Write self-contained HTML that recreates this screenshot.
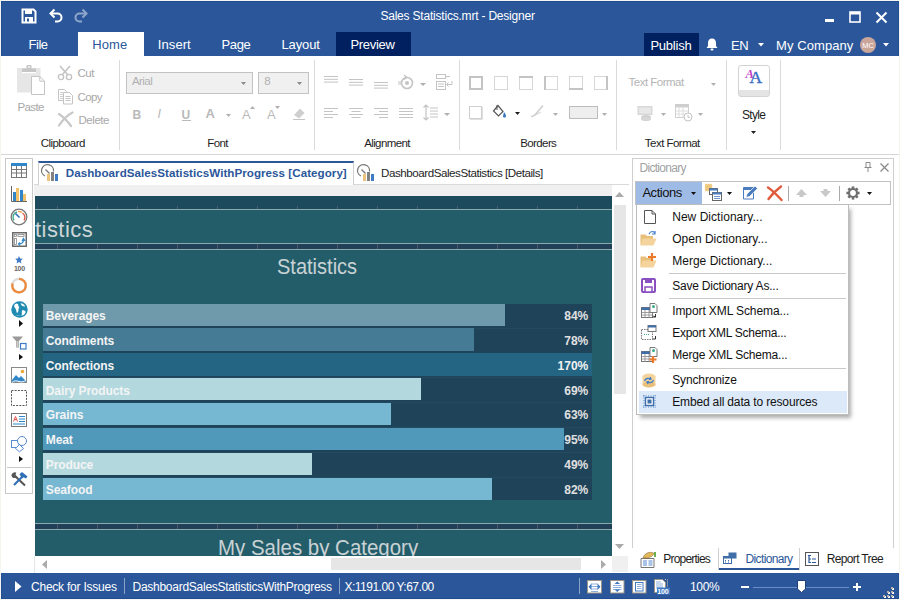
<!DOCTYPE html>
<html><head><meta charset="utf-8">
<style>
*{margin:0;padding:0;box-sizing:border-box}
html,body{width:900px;height:600px;overflow:hidden;background:#fff;font-family:"Liberation Sans",sans-serif}
.a{position:absolute}
.t{position:absolute;white-space:nowrap;line-height:1}
svg{position:absolute;overflow:visible}
</style></head><body>
<div class="a" style="left:0px;top:0px;width:900px;height:600px;background:#fff;border:1px solid #f6f4ef"></div>
<div class="a" style="left:1px;top:1px;width:898px;height:55px;background:#2b579a;border-top:1px solid #1f4c92;border-left:1px solid #234f94;border-right:1px solid #234f94"></div>
<div class="t" style="left:380.40px;top:10.44px;font-size:12px;color:#fff;font-weight:400;letter-spacing:-0.204px;">Sales Statistics.mrt - Designer</div>
<svg style="left:21px;top:8px" width="16" height="16" viewBox="0 0 16 16"><path d="M1.5 1.5h11l2 2v11h-13z" fill="none" stroke="#fff" stroke-width="2"/><rect x="4" y="2" width="7" height="4" fill="#fff"/><rect x="4" y="9" width="8" height="5" fill="#fff"/><rect x="6" y="10.5" width="2" height="3" fill="#2b579a"/></svg>
<svg style="left:48px;top:8px" width="16" height="16" viewBox="0 0 16 16"><path d="M3 5.5h6.5a4 4 0 0 1 0 8H7" fill="none" stroke="#fff" stroke-width="2"/><path d="M6.5 1.5L2.5 5.5L6.5 9.5" fill="none" stroke="#fff" stroke-width="2"/></svg>
<svg style="left:73px;top:8px" width="16" height="16" viewBox="0 0 16 16"><path d="M13 5.5H6.5a4 4 0 0 0 0 8H9" fill="none" stroke="#8fa6cc" stroke-width="2"/><path d="M9.5 1.5L13.5 5.5L9.5 9.5" fill="none" stroke="#8fa6cc" stroke-width="2"/></svg>
<div class="a" style="left:825px;top:19px;width:9px;height:3px;background:#fff;"></div>
<svg style="left:849px;top:11px" width="12" height="12" viewBox="0 0 12 12"><rect x="1" y="1" width="10" height="10" fill="none" stroke="#fff" stroke-width="1.6"/><rect x="1" y="1" width="10" height="2.5" fill="#fff"/></svg>
<svg style="left:875px;top:11px" width="13" height="13" viewBox="0 0 13 13"><path d="M1.5 1.5L11.5 11.5M11.5 1.5L1.5 11.5" stroke="#fff" stroke-width="2"/></svg>
<div class="t" style="left:28.60px;top:37.90px;font-size:13px;color:#fff;font-weight:400;letter-spacing:-0.513px;">File</div>
<div class="a" style="left:78px;top:32px;width:66px;height:24px;background:#fff;"></div>
<div class="t" style="left:92.20px;top:37.90px;font-size:13px;color:#2b579a;font-weight:400;letter-spacing:0.153px;">Home</div>
<div class="t" style="left:157.80px;top:37.90px;font-size:13px;color:#fff;font-weight:400;letter-spacing:0.081px;">Insert</div>
<div class="t" style="left:221.50px;top:37.90px;font-size:13px;color:#fff;font-weight:400;letter-spacing:-0.369px;">Page</div>
<div class="t" style="left:281.40px;top:37.90px;font-size:13px;color:#fff;font-weight:400;letter-spacing:-0.108px;">Layout</div>
<div class="a" style="left:336px;top:32px;width:75px;height:24px;background:#012060;"></div>
<div class="t" style="left:350.40px;top:37.90px;font-size:13px;color:#fff;font-weight:400;letter-spacing:-0.279px;">Preview</div>
<div class="a" style="left:644px;top:33px;width:55px;height:23px;background:#012060;"></div>
<div class="t" style="left:650.40px;top:39.30px;font-size:13px;color:#fff;font-weight:400;letter-spacing:-0.234px;">Publish</div>
<svg style="left:705px;top:37px" width="14" height="14" viewBox="0 0 14 14"><path d="M7 1.5c-2.6 0-4 2-4 4.5v3L1.5 11h11L11 9V6c0-2.5-1.4-4.5-4-4.5z" fill="#fff"/><rect x="5.5" y="11.5" width="3" height="2" rx="1" fill="#fff"/></svg>
<div class="t" style="left:731.00px;top:39.30px;font-size:13px;color:#fff;font-weight:400;letter-spacing:-0.331px;">EN</div>
<svg style="left:757.5px;top:42.5px" width="6" height="3.5" viewBox="0 0 6 3.5"><path d="M0 0h6L3 3.5z" fill="#fff"/></svg>
<div class="t" style="left:776.00px;top:39.30px;font-size:13px;color:#fff;font-weight:400;letter-spacing:0.082px;">My Company</div>
<div class="a" style="left:860px;top:36.5px;width:16px;height:16px;border-radius:50%;background:#c9a59a"></div>
<div class="t" style="left:862.30px;top:41.85px;font-size:7.5px;color:#fff;font-weight:400;letter-spacing:0px;">MC</div>
<svg style="left:882.5px;top:43px" width="6" height="3.5" viewBox="0 0 6 3.5"><path d="M0 0h6L3 3.5z" fill="#fff"/></svg>
<div class="a" style="left:1px;top:154px;width:898px;height:1px;background:#d6d6d6;"></div>
<div class="a" style="left:119px;top:60px;width:1px;height:90px;background:#dadada;"></div>
<div class="a" style="left:314px;top:60px;width:1px;height:90px;background:#dadada;"></div>
<div class="a" style="left:459px;top:60px;width:1px;height:90px;background:#dadada;"></div>
<div class="a" style="left:616px;top:60px;width:1px;height:90px;background:#dadada;"></div>
<div class="a" style="left:726px;top:60px;width:1px;height:90px;background:#dadada;"></div>
<div class="a" style="left:780px;top:60px;width:1px;height:90px;background:#dadada;"></div>
<svg style="left:16px;top:64px" width="32" height="32" viewBox="0 0 32 32"><rect x="1" y="4" width="23.5" height="24.5" fill="#e6e6e6"/><rect x="6" y="4.5" width="14" height="3.5" fill="#c6c6c6"/><rect x="6" y="8" width="14" height="1.2" fill="#fff"/><rect x="10.5" y="1" width="5" height="4" rx="1" fill="#c6c6c6"/><rect x="12.3" y="2.2" width="1.6" height="1.6" fill="#fff"/><path d="M15.5 12.5h8.3l4.7 4.7v13.3h-13z" fill="#fff" stroke="#c4c4c4"/><path d="M23.8 12.5v4.7h4.7" fill="none" stroke="#c4c4c4"/></svg>
<div class="t" style="left:17.40px;top:101.57px;font-size:11.5px;color:#a8a8a8;font-weight:400;letter-spacing:-0.584px;">Paste</div>
<svg style="left:57px;top:65px" width="16" height="16" viewBox="0 0 16 16"><path d="M3 1l8 9M13 1L5 10" stroke="#c4c4c4" stroke-width="1.6"/><circle cx="4" cy="12" r="2.6" fill="none" stroke="#c4c4c4" stroke-width="1.4"/><circle cx="12" cy="12" r="2.6" fill="none" stroke="#c4c4c4" stroke-width="1.4"/></svg>
<div class="t" style="left:77.40px;top:68.47px;font-size:11.5px;color:#a8a8a8;font-weight:400;letter-spacing:-0.469px;">Cut</div>
<svg style="left:57.5px;top:89px" width="16" height="16" viewBox="0 0 16 16"><path d="M0.5 0.5h6l2 2v9h-8z" fill="#fff" stroke="#c4c4c4"/><path d="M2 3.5h3M2 5.5h4M2 7.5h4M2 9.5h4" stroke="#cfcfcf"/><path d="M5.5 3.5h6l3 3v8.5h-9z" fill="#fff" stroke="#c4c4c4"/><path d="M7.5 7.5h5M7.5 9.5h5M7.5 11.5h5" stroke="#c4c4c4"/></svg>
<div class="t" style="left:77.40px;top:91.57px;font-size:11.5px;color:#a8a8a8;font-weight:400;letter-spacing:-0.565px;">Copy</div>
<svg style="left:57.5px;top:112px" width="16" height="15" viewBox="0 0 16 15"><path d="M1 13.5C4 9 8 4 14.5 0.5M1 2c3 2 8 6.5 12 12" fill="none" stroke="#c8c8c8" stroke-width="2.2" stroke-linecap="round"/></svg>
<div class="t" style="left:78.50px;top:114.57px;font-size:11.5px;color:#a8a8a8;font-weight:400;letter-spacing:-0.458px;">Delete</div>
<div class="t" style="left:40.70px;top:137.57px;font-size:11.5px;color:#1e1e1e;font-weight:400;letter-spacing:-0.57px;">Clipboard</div>
<div class="a" style="left:126px;top:72px;width:127px;height:22px;background:#f0f0f0;border:1px solid #c3c3c3"></div>
<div class="t" style="left:132.00px;top:76.47px;font-size:11.5px;color:#b0b0b0;font-weight:400;letter-spacing:-0.563px;">Arial</div>
<svg style="left:240.5px;top:82px" width="5" height="3" viewBox="0 0 5 3"><path d="M0 0h5L2.5 3z" fill="#8a8a8a"/></svg>
<div class="a" style="left:258px;top:72px;width:51px;height:22px;background:#f0f0f0;border:1px solid #c3c3c3"></div>
<div class="t" style="left:264.20px;top:76.47px;font-size:11.5px;color:#b0b0b0;font-weight:400;letter-spacing:0px;">8</div>
<svg style="left:296.5px;top:82px" width="5" height="3" viewBox="0 0 5 3"><path d="M0 0h5L2.5 3z" fill="#8a8a8a"/></svg>
<div class="t" style="left:132.50px;top:108.64px;font-size:12px;color:#b9b9b9;font-weight:700;letter-spacing:0px;">B</div>
<div class="t" style="left:157.50px;top:108.22px;font-size:12.5px;color:#b9b9b9;font-weight:400;letter-spacing:0px;font-style:italic;">I</div>
<div class="t" style="left:181.50px;top:108.64px;font-size:12px;color:#b9b9b9;font-weight:700;letter-spacing:0px;">U</div>
<div class="a" style="left:182px;top:120px;width:9px;height:1px;background:#b9b9b9;"></div>
<div class="t" style="left:205.50px;top:106.80px;font-size:13px;color:#b9b9b9;font-weight:700;letter-spacing:0px;">A</div>
<svg style="left:226px;top:113.5px" width="5" height="3" viewBox="0 0 5 3"><path d="M0 0h5L2.5 3z" fill="#b0b0b0"/></svg>
<div class="t" style="left:242.00px;top:108.30px;font-size:13px;color:#b9b9b9;font-weight:400;letter-spacing:0px;">A</div>
<svg style="left:250px;top:106px" width="5" height="3" viewBox="0 0 5 3"><path d="M0 3L2.5 0L5 3z" fill="#b0b0b0"/></svg>
<div class="t" style="left:267.00px;top:108.30px;font-size:13px;color:#b9b9b9;font-weight:400;letter-spacing:0px;">A</div>
<svg style="left:275px;top:106px" width="5" height="3" viewBox="0 0 5 3"><path d="M0 0L2.5 3L5 0z" fill="#b0b0b0"/></svg>
<svg style="left:292px;top:105px" width="14" height="16" viewBox="0 0 14 16"><path d="M2 10L8 3.5L12.5 8L7 13.5z" fill="#cfcfcf"/><path d="M1 14.5h12" stroke="#c4c4c4"/></svg>
<div class="t" style="left:207.30px;top:137.57px;font-size:11.5px;color:#1e1e1e;font-weight:400;letter-spacing:-0.629px;">Font</div>
<svg style="left:324px;top:75.5px" width="14" height="14" viewBox="0 0 14 14"><rect x="0" y="0.0" width="14" height="1" fill="#c4c4c4"/><rect x="0" y="2.8" width="14" height="1" fill="#c4c4c4"/><rect x="0" y="5.6" width="14" height="1" fill="#c4c4c4"/></svg>
<svg style="left:349px;top:78.5px" width="14" height="14" viewBox="0 0 14 14"><rect x="0" y="0.0" width="14" height="1" fill="#c4c4c4"/><rect x="0" y="2.8" width="14" height="1" fill="#c4c4c4"/><rect x="0" y="5.6" width="14" height="1" fill="#c4c4c4"/></svg>
<svg style="left:374px;top:82px" width="14" height="14" viewBox="0 0 14 14"><rect x="0" y="0.0" width="14" height="1" fill="#c4c4c4"/><rect x="0" y="2.8" width="14" height="1" fill="#c4c4c4"/><rect x="0" y="5.6" width="14" height="1" fill="#c4c4c4"/></svg>
<svg style="left:398px;top:74px" width="16" height="16" viewBox="0 0 16 16"><circle cx="9" cy="9" r="5.5" fill="none" stroke="#c4c4c4" stroke-width="1.6"/><circle cx="9" cy="9" r="2" fill="#c4c4c4"/><path d="M6 1l3 2.5L6 5.5" fill="none" stroke="#c4c4c4" stroke-width="1.3"/><path d="M0 8h3M0 10h3" stroke="#c4c4c4"/></svg>
<svg style="left:420px;top:82.5px" width="6" height="3" viewBox="0 0 6 3"><path d="M0 0h6L3 3z" fill="#b0b0b0"/></svg>
<svg style="left:436px;top:74px" width="17" height="17" viewBox="0 0 17 17"><rect x="0.5" y="0.5" width="9" height="4" fill="none" stroke="#c4c4c4"/><rect x="0.5" y="7.5" width="9" height="8" fill="none" stroke="#c4c4c4"/><path d="M10 2.5h4M2 10h6M2 12.5h6M16 7v3.5h-5M12.5 8.5L10.5 10.5L12.5 12.5" fill="none" stroke="#c4c4c4"/></svg>
<svg style="left:324px;top:108px" width="14" height="14" viewBox="0 0 14 14"><rect x="0" y="0" width="14" height="1" fill="#c4c4c4"/><rect x="0" y="3" width="9" height="1" fill="#c4c4c4"/><rect x="0" y="6" width="14" height="1" fill="#c4c4c4"/><rect x="0" y="9" width="9" height="1" fill="#c4c4c4"/></svg>
<svg style="left:349px;top:108px" width="14" height="14" viewBox="0 0 14 14"><rect x="0.0" y="0" width="14" height="1" fill="#c4c4c4"/><rect x="2.5" y="3" width="9" height="1" fill="#c4c4c4"/><rect x="0.0" y="6" width="14" height="1" fill="#c4c4c4"/><rect x="2.5" y="9" width="9" height="1" fill="#c4c4c4"/></svg>
<svg style="left:374px;top:108px" width="14" height="14" viewBox="0 0 14 14"><rect x="0" y="0" width="14" height="1" fill="#c4c4c4"/><rect x="5" y="3" width="9" height="1" fill="#c4c4c4"/><rect x="0" y="6" width="14" height="1" fill="#c4c4c4"/><rect x="5" y="9" width="9" height="1" fill="#c4c4c4"/></svg>
<svg style="left:399px;top:108px" width="14" height="14" viewBox="0 0 14 14"><rect x="0" y="0" width="14" height="1" fill="#c4c4c4"/><rect x="0" y="3" width="14" height="1" fill="#c4c4c4"/><rect x="0" y="6" width="14" height="1" fill="#c4c4c4"/><rect x="0" y="9" width="14" height="1" fill="#c4c4c4"/></svg>
<svg style="left:423px;top:104px" width="16" height="18" viewBox="0 0 16 18"><path d="M3 1v15M0.5 3.5L3 1L5.5 3.5M0.5 13.5L3 16L5.5 13.5" fill="none" stroke="#c4c4c4" stroke-width="1.2"/><path d="M7 4h8M7 7h8M7 10h8M7 13h8" stroke="#c4c4c4"/></svg>
<svg style="left:444px;top:112.5px" width="6" height="3" viewBox="0 0 6 3"><path d="M0 0h6L3 3z" fill="#b0b0b0"/></svg>
<div class="t" style="left:364.20px;top:137.57px;font-size:11.5px;color:#1e1e1e;font-weight:400;letter-spacing:-0.616px;">Alignment</div>
<svg style="left:469px;top:76px" width="14" height="14" viewBox="0 0 14 14"><rect x="1" y="1" width="12" height="12" fill="none" stroke="#c4c4c4" stroke-width="2"/></svg>
<svg style="left:494px;top:76px" width="14" height="14" viewBox="0 0 14 14"><rect x="0.5" y="0.5" width="13" height="13" fill="none" stroke="#d6d6d6"/></svg>
<svg style="left:519px;top:76px" width="14" height="14" viewBox="0 0 14 14"><rect x="0.5" y="0.5" width="13" height="13" fill="none" stroke="#d6d6d6"/><rect x="0" y="0" width="14" height="2" fill="#c4c4c4"/></svg>
<svg style="left:544px;top:76px" width="14" height="14" viewBox="0 0 14 14"><rect x="0.5" y="0.5" width="13" height="13" fill="none" stroke="#d6d6d6"/><rect x="0" y="0" width="2" height="14" fill="#c4c4c4"/></svg>
<svg style="left:569px;top:76px" width="14" height="14" viewBox="0 0 14 14"><rect x="0.5" y="0.5" width="13" height="13" fill="none" stroke="#d6d6d6"/><rect x="0" y="12" width="14" height="2" fill="#c4c4c4"/></svg>
<svg style="left:594px;top:76px" width="14" height="14" viewBox="0 0 14 14"><rect x="0.5" y="0.5" width="13" height="13" fill="none" stroke="#d6d6d6"/><rect x="12" y="0" width="2" height="14" fill="#c4c4c4"/></svg>
<svg style="left:469px;top:106px" width="14" height="14" viewBox="0 0 14 14"><rect x="0.5" y="0.5" width="12" height="12" fill="none" stroke="#cfcfcf"/><path d="M1 13.5h12.5V1" fill="none" stroke="#e0e0e0"/></svg>
<svg style="left:492px;top:104px" width="16" height="16" viewBox="0 0 16 16"><path d="M6 1.5L1.5 7l5 5L11 7.5z" fill="none" stroke="#555" stroke-width="1.2"/><path d="M5 1v5" stroke="#555"/><path d="M12 8c1.5 2 2 3 2 4s-.8 1.6-1.6 1.6S11 13 11 12z" fill="#3a78c0"/></svg>
<svg style="left:515px;top:112px" width="5" height="3" viewBox="0 0 5 3"><path d="M0 0h5L2.5 3z" fill="#1e1e1e"/></svg>
<svg style="left:530px;top:104px" width="16" height="14" viewBox="0 0 16 14"><path d="M1 12.5c3 0 4-1 6-4l6-7" fill="none" stroke="#d0d0d0" stroke-width="1.6"/><path d="M5 11l6-3" stroke="#d0d0d0"/></svg>
<svg style="left:553px;top:113px" width="5" height="3" viewBox="0 0 5 3"><path d="M0 0h5L2.5 3z" fill="#b0b0b0"/></svg>
<div class="a" style="left:569px;top:106px;width:29px;height:13px;background:#eeeeee;border:1px solid #bdbdbd"></div>
<svg style="left:602px;top:113px" width="5" height="3" viewBox="0 0 5 3"><path d="M0 0h5L2.5 3z" fill="#b0b0b0"/></svg>
<div class="t" style="left:520.20px;top:137.57px;font-size:11.5px;color:#1e1e1e;font-weight:400;letter-spacing:-0.597px;">Borders</div>
<div class="t" style="left:628.60px;top:77.27px;font-size:11.5px;color:#b4b4b4;font-weight:400;letter-spacing:-0.52px;">Text Format</div>
<svg style="left:710.5px;top:82.5px" width="5" height="3" viewBox="0 0 5 3"><path d="M0 0h5L2.5 3z" fill="#b0b0b0"/></svg>
<svg style="left:637px;top:105px" width="16" height="16" viewBox="0 0 16 16"><rect x="0.5" y="1" width="15" height="9" fill="#d8d8d8"/><rect x="2" y="2.5" width="12" height="6" fill="#e8e8e8"/><ellipse cx="9" cy="12" rx="5" ry="2" fill="#d0d0d0"/><ellipse cx="9" cy="14" rx="5" ry="2" fill="#d6d6d6"/></svg>
<svg style="left:661px;top:113px" width="5" height="3" viewBox="0 0 5 3"><path d="M0 0h5L2.5 3z" fill="#b0b0b0"/></svg>
<svg style="left:675px;top:104px" width="18" height="18" viewBox="0 0 18 18"><rect x="0.5" y="0.5" width="13" height="13" fill="#fff" stroke="#cfcfcf"/><rect x="0.5" y="0.5" width="13" height="3" fill="#cfcfcf"/><path d="M0.5 7h13M0.5 10h13M4 3.5v10M8 3.5v10" stroke="#dedede"/><circle cx="13" cy="13" r="4" fill="#fff" stroke="#c4c4c4"/><path d="M13 11v2.3h1.8" fill="none" stroke="#c4c4c4"/></svg>
<svg style="left:698px;top:113px" width="5" height="3" viewBox="0 0 5 3"><path d="M0 0h5L2.5 3z" fill="#b0b0b0"/></svg>
<div class="t" style="left:644.80px;top:137.57px;font-size:11.5px;color:#1e1e1e;font-weight:400;letter-spacing:-0.52px;">Text Format</div>
<div class="a" style="left:738px;top:65px;width:32px;height:32px;border:1px solid #d3d3d3;border-radius:3px;background:linear-gradient(#fff 0,#fff 24px,#e4e4e4 24px)"></div>
<div class="t" style="left:745.50px;top:68.12px;font-size:12.5px;color:#c040c8;font-weight:700;letter-spacing:0px;font-family:'Liberation Serif';font-style:italic;">A</div>
<div class="t" style="left:749.60px;top:69.19px;font-size:17.5px;color:#3a6fc4;font-weight:400;letter-spacing:0px;font-family:'Liberation Serif';-webkit-text-stroke:0.4px #3a6fc4;">A</div>
<div class="t" style="left:742.00px;top:109.14px;font-size:12px;color:#1e1e1e;font-weight:400;letter-spacing:-0.677px;">Style</div>
<svg style="left:750.5px;top:131px" width="5" height="3" viewBox="0 0 5 3"><path d="M0 0h5L2.5 3z" fill="#1e1e1e"/></svg>
<div class="a" style="left:5px;top:158px;width:28px;height:336px;background:#fff;border:1px solid #c9c9c9"></div>
<svg style="left:11px;top:163px" width="16" height="15" viewBox="0 0 16 15"><rect x="0.5" y="0.5" width="15" height="14" fill="#fff" stroke="#777"/><rect x="0" y="0" width="16" height="3" fill="#2f86c8"/><path d="M0.5 6.5h15M0.5 10h15M5.5 3v11.5M10.5 3v11.5" stroke="#777"/></svg>
<svg style="left:11px;top:186px" width="16" height="16" viewBox="0 0 16 16"><path d="M0.5 0v15.5H16" fill="none" stroke="#666"/><rect x="2" y="6" width="3" height="9" fill="#2f86c8"/><rect x="5" y="2" width="3" height="13" fill="#f2c26b"/><rect x="9" y="4" width="3" height="11" fill="#2f86c8"/><rect x="12" y="8" width="3" height="7" fill="#f2c26b"/></svg>
<svg style="left:10px;top:208px" width="18" height="18" viewBox="0 0 18 18"><circle cx="9" cy="9" r="7.8" fill="#fff" stroke="#777" stroke-width="1.3"/><path d="M4 12.5A5.5 5.5 0 0 1 7 4" fill="none" stroke="#3aa98a" stroke-width="1.3"/><path d="M8 3.6A5.5 5.5 0 0 1 12 4.5" fill="none" stroke="#f2a65a" stroke-width="1.3"/><path d="M12.5 5A5.5 5.5 0 0 1 14 12.5" fill="none" stroke="#e0533d" stroke-width="1.3"/><path d="M5.5 5.5L9.5 9.5" stroke="#2f6fb8" stroke-width="1.6"/></svg>
<svg style="left:12px;top:232px" width="15" height="15" viewBox="0 0 15 15"><rect x="0.75" y="0.75" width="13.5" height="13.5" fill="#fff" stroke="#6a6a6a" stroke-width="1.5"/><rect x="2.5" y="2.5" width="2" height="2" fill="none" stroke="#888" stroke-width="0.8"/><rect x="6" y="2.5" width="6" height="2" fill="none" stroke="#888" stroke-width="0.8"/><rect x="2.5" y="6.5" width="2" height="6" fill="none" stroke="#888" stroke-width="0.8"/><path d="M6.5 12c3 0 5-1.5 5-4.5M10 9l1.5-2.5L13 9M8 10.5l-1.5 1.5L8 13.5" fill="none" stroke="#2f86c8" stroke-width="1.2"/></svg>
<svg style="left:15px;top:256.3px" width="8" height="7.5" viewBox="0 0 8 7.5"><path d="M4 0l1.1 2.5 2.8.3-2.1 1.9.6 2.8L4 6.1 1.6 7.5l.6-2.8L.1 2.8l2.8-.3z" fill="#3f7cc5"/></svg>
<div class="t" style="left:14.00px;top:264.57px;font-size:7px;color:#666;font-weight:700;letter-spacing:-0.3px;">100</div>
<svg style="left:10px;top:277px" width="18" height="18" viewBox="0 0 18 18"><circle cx="9" cy="8.6" r="6.8" fill="none" stroke="#dcdcdc" stroke-width="2.3"/><path d="M9 1.8A6.8 6.8 0 1 1 2.6 6.3" fill="none" stroke="#ee8a3c" stroke-width="2.3"/></svg>
<svg style="left:10.5px;top:300.5px" width="17" height="17" viewBox="0 0 17 17"><circle cx="8.5" cy="8.5" r="8.2" fill="#1f8bb2"/><path d="M5 2.5C3 3.5 2.5 5.5 4 7c1.3 1.3 1.2 3.2 2 5.2 1.2-1 1.8-2.8 1.4-4.2 1-1 1.2-2.4-.3-3 .8-1 .3-2.3-2.1-2.5zM9.5 2.2c2 0 3.8 1.2 4.6 3-1.5.6-2.7-.3-3.6-1zM11 9.5c1.6-.5 3.2.3 3.8 1.5-.6 1.8-2.2 3.3-4.4 3.8.8-1.5.2-3.5.6-5.3zM4.5 14c1.5.6 3.2.9 5 .5-.8.8-2.8 1-5-.5z" fill="#fff"/></svg>
<svg style="left:18.5px;top:320px" width="4" height="7" viewBox="0 0 4 7"><path d="M0 0l4 3.5-4 3.5z" fill="#111"/></svg>
<svg style="left:12px;top:335.5px" width="16" height="14" viewBox="0 0 16 14"><path d="M0 0.5h11L7 5v6.5H4V5z" fill="#9a9a9a"/><path d="M4.5 5v6.5h2V5" fill="#ccc"/><rect x="8.5" y="7.5" width="5.5" height="5.5" fill="#fff" stroke="#3f7cc5" stroke-width="1.2"/></svg>
<svg style="left:18.5px;top:354px" width="4" height="6" viewBox="0 0 4 6"><path d="M0 0l4 3-4 3z" fill="#111"/></svg>
<svg style="left:11px;top:367px" width="16" height="16" viewBox="0 0 16 16"><rect x="0.5" y="0.5" width="15" height="15" fill="#fff" stroke="#888"/><circle cx="11.5" cy="4.5" r="1.8" fill="#f2a53a"/><path d="M1 13l4-5 3 3 2-2 5 5v1H1z" fill="#2f86c8"/><path d="M1 15.5c2-2 4-2 7-1s5 0 7-1" fill="none" stroke="#fff" stroke-width="1"/></svg>
<svg style="left:11px;top:390px" width="16" height="16" viewBox="0 0 16 16"><rect x="0.5" y="0.5" width="15" height="15" fill="none" stroke="#555" stroke-dasharray="2 1.2"/></svg>
<svg style="left:11px;top:413px" width="16" height="14" viewBox="0 0 16 14"><rect x="0.5" y="0.5" width="15" height="13" fill="#fff" stroke="#777"/><path d="M2.5 8.5L4.5 3.5L6.5 8.5M3.3 6.5h2.4" fill="none" stroke="#e05050"/><path d="M8 3.5h6M8 6h6M8 8.5h6M2 11h12" stroke="#2f86c8"/></svg>
<svg style="left:10.5px;top:435.5px" width="16" height="16" viewBox="0 0 16 16"><rect x="0.5" y="4.5" width="7.5" height="7" fill="#fff" stroke="#5a8ad0"/><circle cx="11" cy="5" r="4.5" fill="#fff" stroke="#5a8ad0"/><path d="M8.5 8.5l4 4-4 3.3-4-3.3z" fill="#fff" stroke="#5a8ad0"/></svg>
<svg style="left:18.5px;top:456px" width="4" height="6" viewBox="0 0 4 6"><path d="M0 0l4 3-4 3z" fill="#111"/></svg>
<div class="a" style="left:7px;top:467px;width:24px;height:1px;background:#c8c8c8;"></div>
<svg style="left:10.5px;top:472px" width="17" height="14" viewBox="0 0 17 14"><path d="M4 4l10 9.5" stroke="#555" stroke-width="2"/><path d="M1 3.5a3 3 0 0 0 4.5 1.5L3.8 3.2 4.5 1A3 3 0 0 0 1 3.5z" fill="#555" stroke="#555" stroke-width="1.2"/><path d="M12 4L3 13" stroke="#2f6fb8" stroke-width="2.2"/><path d="M8.5 2.2L11 0l5.5 4.5-1.5 2-2.5-1.2-1.5 1z" fill="#2f6fb8"/></svg>
<div class="a" style="left:34px;top:184px;width:595px;height:12px;background:#f0f0f0;border-top:1px solid #d9d9d9;"></div>
<div class="a" style="left:612px;top:185px;width:17px;height:11px;background:#fff;"></div>
<div class="a" style="left:38px;top:161px;width:316px;height:24px;background:#fff;border:1px solid #cfcfcf;border-top:2px solid #2b579a;border-bottom:none"></div>
<svg style="left:42px;top:165px" width="17" height="16" viewBox="0 0 17 16"><path d="M11.5 6.5A6 6 0 1 0 3 11" fill="none" stroke="#777" stroke-width="1.3"/><path d="M3.5 4.5l4 4" stroke="#777" stroke-width="1.3"/><rect x="5" y="9" width="3" height="7" fill="#ecc27c"/><rect x="9" y="7" width="3" height="9" fill="#808080"/><rect x="13" y="9" width="3" height="7" fill="#3f7cc5"/></svg>
<div class="t" style="left:65.80px;top:167.48px;font-size:11.6px;color:#2b579a;font-weight:700;letter-spacing:0.045px;">DashboardSalesStatisticsWithProgress [Category]</div>
<svg style="left:358px;top:165px" width="17" height="16" viewBox="0 0 17 16"><path d="M11.5 6.5A6 6 0 1 0 3 11" fill="none" stroke="#777" stroke-width="1.3"/><path d="M3.5 4.5l4 4" stroke="#777" stroke-width="1.3"/><rect x="5" y="9" width="3" height="7" fill="#ecc27c"/><rect x="9" y="7" width="3" height="9" fill="#808080"/><rect x="13" y="9" width="3" height="7" fill="#3f7cc5"/></svg>
<div class="t" style="left:381.00px;top:167.48px;font-size:11.6px;color:#1e1e1e;font-weight:400;letter-spacing:-0.453px;">DashboardSalesStatistics [Details]</div>
<div class="a" style="left:35px;top:196px;width:577px;height:360px;background:#245d6a;overflow:hidden">
<div class="a" style="left:0px;top:0px;width:577px;height:13px;background:#1e4a5e;"></div>
<div class="a" style="left:0px;top:13px;width:577px;height:1px;background:#8ba8ad;"></div>
<div class="a" style="left:0px;top:47px;width:577px;height:1px;background:#8ba8ad;"></div>
<div class="a" style="left:0px;top:48px;width:577px;height:5px;background:#223f58;"></div>
<div class="a" style="left:0px;top:53px;width:577px;height:1px;background:#8ba8ad;"></div>
<div class="a" style="left:0px;top:327px;width:577px;height:1px;background:#8ba8ad;"></div>
<div class="a" style="left:0px;top:328px;width:577px;height:5px;background:#223f58;"></div>
<div class="a" style="left:0px;top:333px;width:577px;height:1px;background:#8ba8ad;"></div>
<div class="a" style="left:22px;top:9.5px;width:1px;height:3.5px;background:#4a6070;"></div>
<div class="a" style="left:22px;top:48px;width:1px;height:5px;background:#4a5a6c;"></div>
<div class="a" style="left:22px;top:328px;width:1px;height:5px;background:#4a5a6c;"></div>
<div class="a" style="left:62px;top:9.5px;width:1px;height:3.5px;background:#4a6070;"></div>
<div class="a" style="left:62px;top:48px;width:1px;height:5px;background:#4a5a6c;"></div>
<div class="a" style="left:62px;top:328px;width:1px;height:5px;background:#4a5a6c;"></div>
<div class="a" style="left:102px;top:9.5px;width:1px;height:3.5px;background:#4a6070;"></div>
<div class="a" style="left:102px;top:48px;width:1px;height:5px;background:#4a5a6c;"></div>
<div class="a" style="left:102px;top:328px;width:1px;height:5px;background:#4a5a6c;"></div>
<div class="a" style="left:142px;top:9.5px;width:1px;height:3.5px;background:#4a6070;"></div>
<div class="a" style="left:142px;top:48px;width:1px;height:5px;background:#4a5a6c;"></div>
<div class="a" style="left:142px;top:328px;width:1px;height:5px;background:#4a5a6c;"></div>
<div class="a" style="left:182px;top:9.5px;width:1px;height:3.5px;background:#4a6070;"></div>
<div class="a" style="left:182px;top:48px;width:1px;height:5px;background:#4a5a6c;"></div>
<div class="a" style="left:182px;top:328px;width:1px;height:5px;background:#4a5a6c;"></div>
<div class="a" style="left:222px;top:9.5px;width:1px;height:3.5px;background:#4a6070;"></div>
<div class="a" style="left:222px;top:48px;width:1px;height:5px;background:#4a5a6c;"></div>
<div class="a" style="left:222px;top:328px;width:1px;height:5px;background:#4a5a6c;"></div>
<div class="a" style="left:262px;top:9.5px;width:1px;height:3.5px;background:#4a6070;"></div>
<div class="a" style="left:262px;top:48px;width:1px;height:5px;background:#4a5a6c;"></div>
<div class="a" style="left:262px;top:328px;width:1px;height:5px;background:#4a5a6c;"></div>
<div class="a" style="left:302px;top:9.5px;width:1px;height:3.5px;background:#4a6070;"></div>
<div class="a" style="left:302px;top:48px;width:1px;height:5px;background:#4a5a6c;"></div>
<div class="a" style="left:302px;top:328px;width:1px;height:5px;background:#4a5a6c;"></div>
<div class="a" style="left:342px;top:9.5px;width:1px;height:3.5px;background:#4a6070;"></div>
<div class="a" style="left:342px;top:48px;width:1px;height:5px;background:#4a5a6c;"></div>
<div class="a" style="left:342px;top:328px;width:1px;height:5px;background:#4a5a6c;"></div>
<div class="a" style="left:382px;top:9.5px;width:1px;height:3.5px;background:#4a6070;"></div>
<div class="a" style="left:382px;top:48px;width:1px;height:5px;background:#4a5a6c;"></div>
<div class="a" style="left:382px;top:328px;width:1px;height:5px;background:#4a5a6c;"></div>
<div class="a" style="left:422px;top:9.5px;width:1px;height:3.5px;background:#4a6070;"></div>
<div class="a" style="left:422px;top:48px;width:1px;height:5px;background:#4a5a6c;"></div>
<div class="a" style="left:422px;top:328px;width:1px;height:5px;background:#4a5a6c;"></div>
<div class="a" style="left:462px;top:9.5px;width:1px;height:3.5px;background:#4a6070;"></div>
<div class="a" style="left:462px;top:48px;width:1px;height:5px;background:#4a5a6c;"></div>
<div class="a" style="left:462px;top:328px;width:1px;height:5px;background:#4a5a6c;"></div>
<div class="a" style="left:502px;top:9.5px;width:1px;height:3.5px;background:#4a6070;"></div>
<div class="a" style="left:502px;top:48px;width:1px;height:5px;background:#4a5a6c;"></div>
<div class="a" style="left:502px;top:328px;width:1px;height:5px;background:#4a5a6c;"></div>
<div class="a" style="left:542px;top:9.5px;width:1px;height:3.5px;background:#4a6070;"></div>
<div class="a" style="left:542px;top:48px;width:1px;height:5px;background:#4a5a6c;"></div>
<div class="a" style="left:542px;top:328px;width:1px;height:5px;background:#4a5a6c;"></div>
<div class="a" style="left:582px;top:9.5px;width:1px;height:3.5px;background:#4a6070;"></div>
<div class="a" style="left:582px;top:48px;width:1px;height:5px;background:#4a5a6c;"></div>
<div class="a" style="left:582px;top:328px;width:1px;height:5px;background:#4a5a6c;"></div>
<div class="t" style="left:0.00px;top:22.78px;font-size:22px;color:rgba(236,236,236,0.85);font-weight:400;letter-spacing:0.45px;">tistics</div>
<div class="t" style="left:242.30px;top:59.58px;font-size:22px;color:rgba(232,232,232,0.85);font-weight:400;letter-spacing:0px;transform:scaleX(0.91);transform-origin:0 0;">Statistics</div>
<div class="t" style="left:183.40px;top:340.58px;font-size:22px;color:rgba(232,232,232,0.85);font-weight:400;letter-spacing:0px;transform:scaleX(0.93);transform-origin:0 0;">My Sales by Category</div>
<div class="a" style="left:8px;top:107.5px;width:549px;height:196.4px;background:#1f4359;"></div>
<div class="a" style="left:8px;top:107.5px;width:462px;height:22.4px;background:#6f9aab;"></div>
<div class="t" style="left:10.80px;top:114.04px;font-size:12px;color:#f4f4f4;font-weight:700;letter-spacing:-0.1px;">Beverages</div>
<div class="t" style="left:529.27px;top:114.04px;font-size:12px;color:#e0e0e0;font-weight:700;letter-spacing:0px;">84%</div>
<div class="a" style="left:8px;top:131.76px;width:549px;height:1px;background:#224a60;"></div>
<div class="a" style="left:8px;top:132.36px;width:431px;height:22.4px;background:#467b96;"></div>
<div class="t" style="left:10.80px;top:138.90px;font-size:12px;color:#f4f4f4;font-weight:700;letter-spacing:-0.1px;">Condiments</div>
<div class="t" style="left:529.27px;top:138.90px;font-size:12px;color:#e0e0e0;font-weight:700;letter-spacing:0px;">78%</div>
<div class="a" style="left:8px;top:156.62px;width:549px;height:1px;background:#224a60;"></div>
<div class="a" style="left:8px;top:157.22000000000003px;width:549px;height:22.4px;background:#246584;"></div>
<div class="t" style="left:10.80px;top:163.76px;font-size:12px;color:#f4f4f4;font-weight:700;letter-spacing:-0.1px;">Confections</div>
<div class="t" style="left:522.60px;top:163.76px;font-size:12px;color:#f2f2f2;font-weight:700;letter-spacing:0px;">170%</div>
<div class="a" style="left:8px;top:181.48000000000002px;width:549px;height:1px;background:#224a60;"></div>
<div class="a" style="left:8px;top:182.07999999999998px;width:378px;height:22.4px;background:#b3d9df;"></div>
<div class="t" style="left:10.80px;top:188.62px;font-size:12px;color:#f4f4f4;font-weight:700;letter-spacing:-0.1px;">Dairy Products</div>
<div class="t" style="left:529.27px;top:188.62px;font-size:12px;color:#e0e0e0;font-weight:700;letter-spacing:0px;">69%</div>
<div class="a" style="left:8px;top:206.33999999999997px;width:549px;height:1px;background:#224a60;"></div>
<div class="a" style="left:8px;top:206.94px;width:348px;height:22.4px;background:#76b8d2;"></div>
<div class="t" style="left:10.80px;top:213.48px;font-size:12px;color:#f4f4f4;font-weight:700;letter-spacing:-0.1px;">Grains</div>
<div class="t" style="left:529.27px;top:213.48px;font-size:12px;color:#e0e0e0;font-weight:700;letter-spacing:0px;">63%</div>
<div class="a" style="left:8px;top:231.2px;width:549px;height:1px;background:#224a60;"></div>
<div class="a" style="left:8px;top:231.8px;width:521px;height:22.4px;background:#5199bb;"></div>
<div class="t" style="left:10.80px;top:238.34px;font-size:12px;color:#f4f4f4;font-weight:700;letter-spacing:-0.1px;">Meat</div>
<div class="t" style="left:529.27px;top:238.34px;font-size:12px;color:#e0e0e0;font-weight:700;letter-spacing:0px;">95%</div>
<div class="a" style="left:8px;top:256.06px;width:549px;height:1px;background:#224a60;"></div>
<div class="a" style="left:8px;top:256.66px;width:269px;height:22.4px;background:#b3d9df;"></div>
<div class="t" style="left:10.80px;top:263.20px;font-size:12px;color:#f4f4f4;font-weight:700;letter-spacing:-0.1px;">Produce</div>
<div class="t" style="left:529.27px;top:263.20px;font-size:12px;color:#e0e0e0;font-weight:700;letter-spacing:0px;">49%</div>
<div class="a" style="left:8px;top:280.92px;width:549px;height:1px;background:#224a60;"></div>
<div class="a" style="left:8px;top:281.52px;width:449px;height:22.4px;background:#76b8d2;"></div>
<div class="t" style="left:10.80px;top:288.06px;font-size:12px;color:#f4f4f4;font-weight:700;letter-spacing:-0.1px;">Seafood</div>
<div class="t" style="left:529.27px;top:288.06px;font-size:12px;color:#e0e0e0;font-weight:700;letter-spacing:0px;">82%</div>
</div>
<svg style="left:615px;top:192px" width="9" height="5" viewBox="0 0 9 5"><path d="M0 5L4.5 0L9 5z" fill="#ababab"/></svg>
<div class="a" style="left:614px;top:205px;width:12px;height:189px;background:#e6e6e6;"></div>
<svg style="left:615px;top:544px" width="9" height="5" viewBox="0 0 9 5"><path d="M0 0L4.5 5L9 0z" fill="#ababab"/></svg>
<div class="a" style="left:331px;top:558px;width:250px;height:12px;background:#e6e6e6;"></div>
<svg style="left:42px;top:560px" width="5" height="9" viewBox="0 0 5 9"><path d="M5 0L0 4.5L5 9z" fill="#ababab"/></svg>
<svg style="left:601px;top:560px" width="5" height="9" viewBox="0 0 5 9"><path d="M0 0L5 4.5L0 9z" fill="#ababab"/></svg>
<div class="a" style="left:612px;top:556px;width:16px;height:16px;background:#f0f0f0;"></div>
<div class="a" style="left:34px;top:556px;width:1px;height:17px;background:#e6e6e6;"></div>
<div class="a" style="left:632px;top:158px;width:262px;height:390px;background:#fff;border:1px solid #cfcfcf;border-bottom:none"></div>
<div class="t" style="left:639.50px;top:162.14px;font-size:12px;color:#a2a2a2;font-weight:400;letter-spacing:-0.706px;">Dictionary</div>
<svg style="left:864px;top:162px" width="8" height="10" viewBox="0 0 8 10"><path d="M2 0.5h4v5H2zM0.5 5.5h7M4 5.5V10" fill="none" stroke="#8a8a8a"/></svg>
<svg style="left:880px;top:163px" width="9" height="9" viewBox="0 0 9 9"><path d="M0.5 0.5l8 8M8.5 0.5l-8 8" stroke="#888" stroke-width="1.2"/></svg>
<div class="a" style="left:635px;top:181px;width:256px;height:24px;background:#fff;border:1px solid #c3c3c3"></div>
<div class="a" style="left:636px;top:182px;width:66px;height:22px;background:#9ebbe6;"></div>
<div class="t" style="left:642.40px;top:185.60px;font-size:13px;color:#111;font-weight:400;letter-spacing:-0.45px;">Actions</div>
<svg style="left:691px;top:192px" width="5" height="3" viewBox="0 0 5 3"><path d="M0 0h5L2.5 3z" fill="#111"/></svg>
<svg style="left:705px;top:184px" width="17" height="17" viewBox="0 0 17 17"><rect x="0" y="0" width="7" height="7" fill="#eec77e"/><path d="M0 0h7v7H0z" fill="none" stroke="#f6e2b8" stroke-dasharray="1 1"/><rect x="4.5" y="4.5" width="8" height="6" fill="#fff" stroke="#666"/><rect x="4.5" y="4.5" width="8" height="2" fill="#4a7cc0"/><rect x="7.5" y="8.5" width="9" height="8" fill="#fff" stroke="#666"/><rect x="7.5" y="8.5" width="9" height="2" fill="#4a7cc0"/><path d="M9 12.5h6M9 14.5h6" stroke="#4a7cc0" stroke-width="0.8"/></svg>
<svg style="left:727px;top:192px" width="5" height="3" viewBox="0 0 5 3"><path d="M0 0h5L2.5 3z" fill="#111"/></svg>
<svg style="left:743px;top:184px" width="16" height="16" viewBox="0 0 16 16"><path d="M0.5 3.5h10v11.5H0.5z" fill="#fff" stroke="#4a7cc0"/><rect x="0.5" y="3.5" width="10" height="2.5" fill="#4a7cc0"/><path d="M3 13.5l1-3.5 8-8 2.5 2.5-8 8z" fill="#4a7cc0" stroke="#fff" stroke-width="0.7"/></svg>
<svg style="left:767px;top:185px" width="16" height="16" viewBox="0 0 16 16"><path d="M1 2.5C5 5 9 9 14.5 15M14 1.5C10 4.5 5 9 1.5 14" fill="none" stroke="#e05a3c" stroke-width="2.4" stroke-linecap="round"/></svg>
<div class="a" style="left:788px;top:186px;width:1px;height:15px;background:#aaa;"></div>
<svg style="left:796px;top:189px" width="11" height="8" viewBox="0 0 11 8"><path d="M0 6L5.5 0L11 6H7.5v2h-4V6z" fill="#c8c8c8"/></svg>
<svg style="left:820px;top:189px" width="11" height="8" viewBox="0 0 11 8"><path d="M0 2L5.5 8L11 2H7.5V0h-4v2z" fill="#c8c8c8"/></svg>
<div class="a" style="left:839px;top:186px;width:1px;height:15px;background:#aaa;"></div>
<svg style="left:845.8px;top:185.8px" width="14" height="14" viewBox="0 0 14 14"><path d="M11.20 7.00L13.60 7.00" stroke="#6e6e6e" stroke-width="2.6"/><path d="M9.97 9.97L11.67 11.67" stroke="#6e6e6e" stroke-width="2.6"/><path d="M7.00 11.20L7.00 13.60" stroke="#6e6e6e" stroke-width="2.6"/><path d="M4.03 9.97L2.33 11.67" stroke="#6e6e6e" stroke-width="2.6"/><path d="M2.80 7.00L0.40 7.00" stroke="#6e6e6e" stroke-width="2.6"/><path d="M4.03 4.03L2.33 2.33" stroke="#6e6e6e" stroke-width="2.6"/><path d="M7.00 2.80L7.00 0.40" stroke="#6e6e6e" stroke-width="2.6"/><path d="M9.97 4.03L11.67 2.33" stroke="#6e6e6e" stroke-width="2.6"/><circle cx="7" cy="7" r="4" fill="none" stroke="#6e6e6e" stroke-width="2.2"/></svg>
<svg style="left:867px;top:192px" width="5" height="3" viewBox="0 0 5 3"><path d="M0 0h5L2.5 3z" fill="#111"/></svg>
<svg style="left:640px;top:551px" width="17" height="17" viewBox="0 0 17 17"><path d="M1 7.5h13v9H1z" fill="#fff" stroke="#777"/><path d="M3 10h4M3 12h4M3 14h4M8.5 10h4M8.5 12h4M8.5 14h4" stroke="#3f7cc5" stroke-width="0.9"/><path d="M3 7c1-3 3-5 6-5.5 2-.3 4 0 5 1-1 2-3 4-7 4.5z" fill="#e2b85a" stroke="#8a6a30" stroke-width="0.6"/><rect x="14" y="1" width="2" height="5" fill="#6ab04c"/></svg>
<div class="t" style="left:663.30px;top:553.14px;font-size:12px;color:#1e1e1e;font-weight:400;letter-spacing:-0.8px;">Properties</div>
<div class="a" style="left:718px;top:548px;width:1px;height:22px;background:#d0d0d0;"></div>
<div class="a" style="left:799px;top:548px;width:1px;height:22px;background:#d0d0d0;"></div>
<div class="a" style="left:719px;top:568px;width:80px;height:2px;background:#2b579a;"></div>
<svg style="left:723px;top:552px" width="14" height="12" viewBox="0 0 14 12"><rect x="5.5" y="0.5" width="8" height="6" fill="#3f6ea8"/><rect x="0.5" y="4.5" width="8" height="7" fill="#fff" stroke="#3f6ea8"/><rect x="0.5" y="4.5" width="8" height="2" fill="#3f6ea8"/><path d="M2 8.5h1M5 8.5h1M2 10h1M5 10h1" stroke="#3f6ea8"/></svg>
<div class="t" style="left:745.60px;top:553.14px;font-size:12px;color:#2b579a;font-weight:400;letter-spacing:-0.656px;">Dictionary</div>
<svg style="left:805px;top:552px" width="14" height="14" viewBox="0 0 14 14"><rect x="0.5" y="0.5" width="13" height="13" fill="#fff" stroke="#555"/><path d="M3 3.5h3M4 3.5v7h2M4 7h2M7 7h4M7 10.5h4" fill="none" stroke="#2b579a" stroke-width="1.2"/></svg>
<div class="t" style="left:826.70px;top:553.14px;font-size:12px;color:#1e1e1e;font-weight:400;letter-spacing:-0.643px;">Report Tree</div>
<div class="a" style="left:1px;top:573px;width:898px;height:26px;background:#2b579a;border-bottom:1px solid #1f4c92;border-left:1px solid #234f94;border-right:1px solid #234f94"></div>
<svg style="left:15px;top:581px" width="6.5" height="11" viewBox="0 0 6.5 11"><path d="M0 0l6.5 5.5L0 11z" fill="#fff"/></svg>
<div class="t" style="left:31.00px;top:581.24px;font-size:12px;color:#fff;font-weight:400;letter-spacing:-0.23px;">Check for Issues</div>
<div class="a" style="left:124px;top:578px;width:1px;height:16px;background:#8aa2c8;"></div>
<div class="t" style="left:132.50px;top:581.24px;font-size:12px;color:#fff;font-weight:400;letter-spacing:-0.263px;">DashboardSalesStatisticsWithProgress</div>
<div class="a" style="left:339px;top:578px;width:1px;height:16px;background:#8aa2c8;"></div>
<div class="t" style="left:344.40px;top:581.24px;font-size:12px;color:#fff;font-weight:400;letter-spacing:-0.486px;">X:1191.00 Y:67.00</div>
<div class="a" style="left:579px;top:578px;width:1px;height:16px;background:#8aa2c8;"></div>
<svg style="left:586.5px;top:579.5px" width="16" height="14" viewBox="0 0 16 14"><rect x="0.5" y="0.5" width="14" height="12.5" fill="#fff" stroke="#9c9488"/><path d="M4 4h7M4 6.5h7M4 9h7M4 11.5h7" stroke="#8fb0dc"/><path d="M1.5 6.75L4.5 3.5V10zM13.5 6.75L10.5 3.5V10z" fill="#3f78c0"/></svg>
<svg style="left:609.5px;top:579.5px" width="15" height="14" viewBox="0 0 15 14"><rect x="0.5" y="0.5" width="13.5" height="12.5" fill="#fff" stroke="#9c9488"/><path d="M3 5.5h8.5M3 7.5h8.5M3 9.5h8.5" stroke="#8fb0dc"/><path d="M7.25 1.5L4.5 4h5.5zM7.25 12L4.5 9.5h5.5z" fill="#3f78c0"/></svg>
<svg style="left:632px;top:579.5px" width="15" height="14" viewBox="0 0 15 14"><rect x="0.5" y="0.5" width="13.5" height="12.5" fill="#fff" stroke="#9c9488"/><rect x="3.5" y="2.5" width="7.5" height="8.5" fill="#fff" stroke="#3f78c0"/><path d="M5 4.5h4.5M5 6.5h4.5M5 8.5h4.5" stroke="#8fb0dc"/></svg>
<svg style="left:654px;top:578.5px" width="17" height="17" viewBox="0 0 17 17"><path d="M0.5 0.5h8l3 3v10H0.5z" fill="#fff" stroke="#9c9488"/><path d="M2 3h5M2 5h7M2 7h7M2 9h7" stroke="#8fb0dc"/><path d="M13.5 0.5v8M11 0.5h2" stroke="#c8c0b0" stroke-dasharray="1 1"/><rect x="3" y="8.5" width="13" height="7" fill="#3f78c0"/></svg>
<div class="t" style="left:657.30px;top:587.77px;font-size:7px;color:#fff;font-weight:700;letter-spacing:-0.2px;">100</div>
<div class="t" style="left:690.00px;top:581.24px;font-size:12px;color:#fff;font-weight:400;letter-spacing:-0.351px;">100%</div>
<div class="a" style="left:741px;top:586px;width:8px;height:2px;background:#fff;"></div>
<div class="a" style="left:753px;top:587px;width:96px;height:1px;background:#6b8cc6;"></div>
<svg style="left:797px;top:580px" width="9" height="13" viewBox="0 0 9 13"><path d="M0.5 0.5h8v8.5L4.5 12.5 0.5 9z" fill="#fff" stroke="#1d3f7a"/></svg>
<div class="a" style="left:852.5px;top:586px;width:8.5px;height:2px;background:#fff;"></div>
<div class="a" style="left:855.75px;top:582.75px;width:2px;height:8.5px;background:#fff;"></div>
<svg style="left:883px;top:587px" width="12" height="11" viewBox="0 0 12 11"><rect x="9" y="1" width="2" height="2" fill="#fff"/><rect x="8" y="0" width="2" height="2" fill="#b8b2a8"/><rect x="5" y="5" width="2" height="2" fill="#fff"/><rect x="4" y="4" width="2" height="2" fill="#b8b2a8"/><rect x="9" y="5" width="2" height="2" fill="#fff"/><rect x="8" y="4" width="2" height="2" fill="#b8b2a8"/><rect x="1" y="9" width="2" height="2" fill="#fff"/><rect x="0" y="8" width="2" height="2" fill="#b8b2a8"/><rect x="5" y="9" width="2" height="2" fill="#fff"/><rect x="4" y="8" width="2" height="2" fill="#b8b2a8"/><rect x="9" y="9" width="2" height="2" fill="#fff"/><rect x="8" y="8" width="2" height="2" fill="#b8b2a8"/></svg>
<div class="a" style="left:636px;top:204px;width:213px;height:211px;background:#fff;border:1px solid #bdbdbd;box-shadow:3px 4px 4px -1px rgba(0,0,0,0.32)"></div>
<div class="a" style="left:639px;top:391px;width:208px;height:22px;background:#dce9f8;"></div>
<div class="t" style="left:672.20px;top:210.64px;font-size:12px;color:#111;font-weight:400;letter-spacing:0.035px;">New Dictionary...</div>
<div class="t" style="left:672.20px;top:232.64px;font-size:12px;color:#111;font-weight:400;letter-spacing:0.008px;">Open Dictionary...</div>
<div class="t" style="left:672.20px;top:254.74px;font-size:12px;color:#111;font-weight:400;letter-spacing:0.02px;">Merge Dictionary...</div>
<div class="t" style="left:672.20px;top:279.94px;font-size:12px;color:#111;font-weight:400;letter-spacing:-0.206px;">Save Dictionary As...</div>
<div class="t" style="left:672.20px;top:305.34px;font-size:12px;color:#111;font-weight:400;letter-spacing:-0.097px;">Import XML Schema...</div>
<div class="t" style="left:672.20px;top:327.14px;font-size:12px;color:#111;font-weight:400;letter-spacing:-0.27px;">Export XML Schema...</div>
<div class="t" style="left:672.20px;top:349.14px;font-size:12px;color:#111;font-weight:400;letter-spacing:-0.191px;">Merge XML Schema...</div>
<div class="t" style="left:672.20px;top:374.14px;font-size:12px;color:#111;font-weight:400;letter-spacing:-0.132px;">Synchronize</div>
<div class="t" style="left:672.20px;top:395.84px;font-size:12px;color:#111;font-weight:400;letter-spacing:-0.153px;">Embed all data to resources</div>
<div class="a" style="left:669px;top:273px;width:177px;height:1px;background:#c8c8c8;"></div>
<div class="a" style="left:669px;top:298px;width:177px;height:1px;background:#c8c8c8;"></div>
<div class="a" style="left:669px;top:368px;width:177px;height:1px;background:#c8c8c8;"></div>
<svg style="left:644px;top:210px" width="12" height="14" viewBox="0 0 12 14"><path d="M0.5 0.5h7.5l3.5 3.5v9.5H0.5z" fill="#fff" stroke="#555"/><path d="M8 0.5v3.5h3.5" fill="none" stroke="#555"/></svg>
<svg style="left:640px;top:230px" width="17" height="16" viewBox="0 0 17 16"><path d="M0.5 4.5h5l1.5 1.5h6v9H0.5z" fill="#e8c07a"/><path d="M2.5 8.5h14l-3 7H0.5z" fill="#f4d49c"/><path d="M9 4c1-2 3-3 5-2l1 1.5M15 1v3h-3" fill="none" stroke="#3f7cc5" stroke-width="1.1"/></svg>
<svg style="left:640px;top:252px" width="17" height="16" viewBox="0 0 17 16"><path d="M0.5 4.5h5l1.5 1.5h6v9H0.5z" fill="#e8c07a"/><path d="M2.5 8.5h14l-3 7H0.5z" fill="#f4d49c"/><path d="M12 1v8M8 5h8" stroke="#ec7a2c" stroke-width="2.2"/></svg>
<svg style="left:641px;top:278px" width="15" height="15" viewBox="0 0 15 15"><rect x="1" y="1" width="13" height="13" rx="1" fill="#fff" stroke="#8a4fc0" stroke-width="2"/><rect x="4" y="1" width="7" height="4" fill="#8a4fc0"/><rect x="4" y="9" width="7" height="5" fill="#fff" stroke="#8a4fc0" stroke-width="1.5"/></svg>
<svg style="left:641px;top:303px" width="17" height="17" viewBox="0 0 17 17"><rect x="0.5" y="4.5" width="11" height="10" fill="#fff" stroke="#777"/><rect x="0.5" y="4.5" width="11" height="2.5" fill="#3f6ea8"/><path d="M0.5 9.5h11M0.5 12h11M4 7v8M8 7v8" stroke="#888" stroke-width="0.8"/><path d="M9 0.5h5l2 2v7H9z" fill="#fff" stroke="#777"/><circle cx="12.5" cy="3.5" r="1.5" fill="#3aa98a"/><path d="M14.5 11v3h-3M12.5 13l2 1" fill="none" stroke="#333"/></svg>
<svg style="left:641px;top:325px" width="17" height="17" viewBox="0 0 17 17"><rect x="0.5" y="4.5" width="11" height="10" fill="#fff" stroke="#777" stroke-dasharray="1.5 1"/><path d="M3 9.5h6" stroke="#3aa98a" stroke-dasharray="1 1"/><rect x="7" y="0.5" width="8" height="6" fill="#fff" stroke="#777"/><rect x="7" y="0.5" width="8" height="2" fill="#3f6ea8"/><path d="M14.5 11v3h-3" fill="none" stroke="#333"/></svg>
<svg style="left:641px;top:347px" width="17" height="17" viewBox="0 0 17 17"><rect x="0.5" y="4.5" width="11" height="10" fill="#fff" stroke="#777"/><rect x="0.5" y="4.5" width="11" height="2.5" fill="#3f6ea8"/><path d="M0.5 9.5h11M0.5 12h11M4 7v8M8 7v8" stroke="#888" stroke-width="0.8"/><path d="M9 0.5h5l2 2v7H9z" fill="#fff" stroke="#777"/><circle cx="12.5" cy="3.5" r="1.5" fill="#3aa98a"/><path d="M12 9v7M8.5 12.5h7" stroke="#ec7a2c" stroke-width="2.2"/></svg>
<svg style="left:641px;top:373px" width="16" height="15" viewBox="0 0 16 15"><ellipse cx="8" cy="3.5" rx="6.5" ry="3" fill="#f4d49c"/><rect x="1.5" y="3.5" width="13" height="8" fill="#f4d49c"/><ellipse cx="8" cy="11.5" rx="6.5" ry="3" fill="#e8c07a"/><path d="M3.5 8c1-3 4-3 6-2M9 4l1 2-2 .5M12.5 7c-1 3-4 3-6 2M7 11l-1-2 2-.5" fill="none" stroke="#3f7cc5" stroke-width="1.3"/></svg>
<svg style="left:643px;top:395px" width="13" height="13" viewBox="0 0 13 13"><rect x="2.5" y="2.5" width="8" height="8" fill="#fff" stroke="#3f6ea8" stroke-width="1.4"/><rect x="4.5" y="4.5" width="4" height="4" fill="#3f6ea8"/><path d="M0 1h13M0 12h13M1 0v13M12 0v13" stroke="#3f7cc5" stroke-dasharray="1 1.5" stroke-width="0.9"/></svg>
</body></html>
